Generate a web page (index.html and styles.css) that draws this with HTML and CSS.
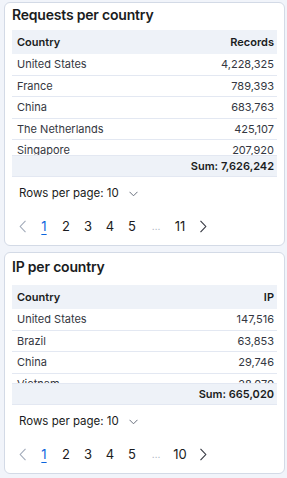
FILE: index.html
```html
<!DOCTYPE html>
<html>
<head>
<meta charset="utf-8">
<link rel="stylesheet" href="styles.css">
</head>
<body>
<div class="panel">
  <section class="card">
    <h2 class="title">Requests per country</h2>
    <div class="scroll scroll--tall">
      <div class="row row--head"><span>Country</span><span>Records</span></div>
      <div class="row"><span>United States</span><span>4,228,325</span></div>
      <div class="row"><span>France</span><span>789,393</span></div>
      <div class="row"><span>China</span><span>683,763</span></div>
      <div class="row"><span>The Netherlands</span><span>425,107</span></div>
      <div class="row"><span>Singapore</span><span>207,920</span></div>
    </div>
    <div class="sum">Sum: 7,626,242</div>
    <div class="rpp">Rows per page: 10
      <svg class="caret" width="9" height="6" viewBox="0 0 9 6"><path d="M0.5 0.8 L4.5 4.8 L8.5 0.8" fill="none" stroke="#69707d" stroke-width="1"/></svg>
    </div>
    <nav class="pager">
      <svg class="arrow arrow--prev" width="8" height="13" viewBox="0 0 8 13"><path d="M6.5 0.8 L1.2 6.5 L6.5 12.2" fill="none" stroke="#a2abba" stroke-width="1.1"/></svg>
      <span class="pg pg--active">1</span>
      <span class="pg">2</span>
      <span class="pg">3</span>
      <span class="pg">4</span>
      <span class="pg">5</span>
      <span class="pg pg--dots">…</span>
      <span class="pg">11</span>
      <svg class="arrow arrow--next" width="8" height="13" viewBox="0 0 8 13"><path d="M1.5 0.8 L6.8 6.5 L1.5 12.2" fill="none" stroke="#343741" stroke-width="1.1"/></svg>
    </nav>
  </section>
  <section class="card card--second">
    <h2 class="title">IP per country</h2>
    <div class="scroll scroll--short">
      <div class="row row--head"><span>Country</span><span>IP</span></div>
      <div class="row"><span>United States</span><span>147,516</span></div>
      <div class="row"><span>Brazil</span><span>63,853</span></div>
      <div class="row"><span>China</span><span>29,746</span></div>
      <div class="row"><span>Vietnam</span><span>28,079</span></div>
    </div>
    <div class="sum">Sum: 665,020</div>
    <div class="rpp">Rows per page: 10
      <svg class="caret" width="9" height="6" viewBox="0 0 9 6"><path d="M0.5 0.8 L4.5 4.8 L8.5 0.8" fill="none" stroke="#69707d" stroke-width="1"/></svg>
    </div>
    <nav class="pager">
      <svg class="arrow arrow--prev" width="8" height="13" viewBox="0 0 8 13"><path d="M6.5 0.8 L1.2 6.5 L6.5 12.2" fill="none" stroke="#a2abba" stroke-width="1.1"/></svg>
      <span class="pg pg--active">1</span>
      <span class="pg">2</span>
      <span class="pg">3</span>
      <span class="pg">4</span>
      <span class="pg">5</span>
      <span class="pg pg--dots">…</span>
      <span class="pg">10</span>
      <svg class="arrow arrow--next" width="8" height="13" viewBox="0 0 8 13"><path d="M1.5 0.8 L6.8 6.5 L1.5 12.2" fill="none" stroke="#343741" stroke-width="1.1"/></svg>
    </nav>
  </section>
</div>
</body>
</html>
```
FILE: styles.css
```css
html, body {
  margin: 0;
  padding: 0;
  background: #f1f4fa;
}
body {
  font-family: Inter, "Noto Sans", sans-serif;
  color: #343741;
}
.panel {
  display: flex;
  flex-direction: column;
  gap: 6px;
  padding: 2px 2px 0 4px;
}
.card {
  width: 281px;
  box-sizing: border-box;
  background: #fff;
  border: 1px solid #d3dae6;
  border-radius: 6px;
  padding: 3px 7px 7px 7px;
}
.card--second {
  padding-top: 5px;
}
.title {
  margin: 0 0 7px 0;
  font-size: 14px;
  line-height: 17px;
  font-weight: 600;
  letter-spacing: -0.2px;
  color: #1a1c21;
}
.card--second .title {
  margin-bottom: 10px;
}
.scroll {
  overflow: hidden;
}
.scroll--tall { height: 125px; }
.scroll--short { height: 98px; }
.row {
  display: flex;
  justify-content: space-between;
  align-items: center;
  height: 21.5px;
  box-sizing: border-box;
  padding: 0 3px 0 5px;
  border-bottom: 1px solid #e3e8f2;
  font-size: 11px;
}
.row--head {
  height: 24px;
  background: #eef2f8;
  border-bottom: none;
  font-weight: 600;
  color: #1a1c21;
}
.sum {
  height: 22px;
  box-sizing: border-box;
  display: flex;
  align-items: center;
  justify-content: flex-end;
  padding: 0 3px;
  background: #eef2f8;
  border-top: 1px solid #e3e8f2;
  border-bottom: 1px solid #e3e8f2;
  font-size: 11px;
  font-weight: 600;
  color: #1a1c21;
}
.rpp {
  display: flex;
  align-items: center;
  gap: 10px;
  height: 20px;
  margin-top: 6px;
  padding-left: 7px;
  font-size: 11.5px;
  color: #1a1c21;
}
.caret {
  margin-top: 1px;
}
.pager {
  display: flex;
  align-items: center;
  height: 24px;
  margin-top: 11px;
  padding-left: 7px;
  font-size: 13px;
  color: #1a1c21;
}
.arrow {
  flex: none;
}
.arrow--prev {
  margin-right: 6px;
}
.arrow--next {
  margin-left: 8px;
}
.pg {
  width: 22px;
  text-align: center;
  line-height: 24px;
}
.pg--active {
  color: #0b64dd;
  text-decoration: underline;
  text-underline-offset: 3px;
}
.pg--dots {
  color: #a2abba;
  font-size: 10px;
  width: 26px;
}
```
